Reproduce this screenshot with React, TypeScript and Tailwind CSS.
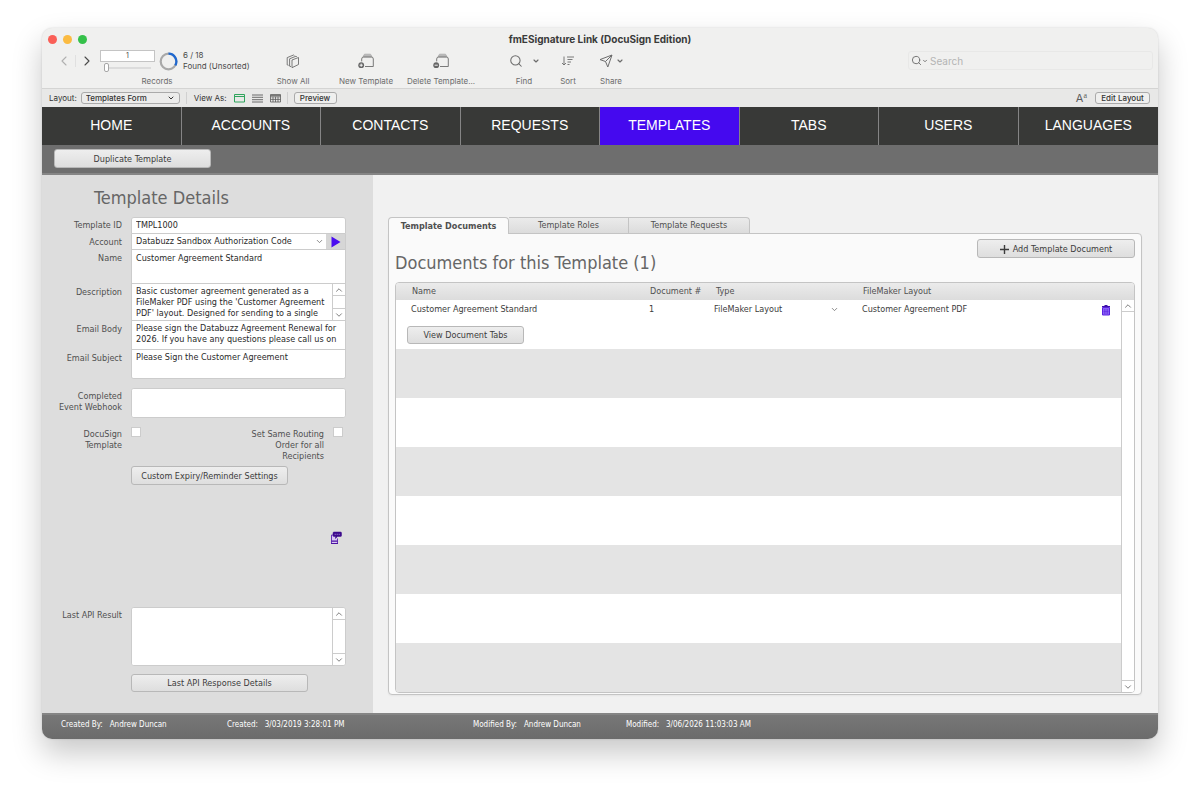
import React from 'react';
import { ChevronDown, ChevronLeft, ChevronRight, ChevronUp, Search } from 'lucide-react';

const navItems = ['HOME', 'ACCOUNTS', 'CONTACTS', 'REQUESTS', 'TEMPLATES', 'TABS', 'USERS', 'LANGUAGES'];

const buttonClass =
  'flex items-center justify-center rounded-[3px] border border-[#b8b8b8] bg-linear-to-b from-[#eeeeee] to-[#dedede] pt-px text-[#3c3c3c]';

const fieldClass = 'block w-full resize-none overflow-hidden bg-white px-1 text-[#2a2a2a] outline-none';

interface ToolItemProps {
  label: string;
  className: string;
  children: React.ReactNode;
}

const ToolItem: React.FC<ToolItemProps> = ({ label, className, children }) => (
  <button type="button" className={`flex shrink-0 flex-col items-center text-[#6c6c6c] ${className}`}>
    <span className="flex h-6 items-center">{children}</span>
    <span className="mt-[2px] h-3 text-[8px] leading-3 whitespace-nowrap">{label}</span>
  </button>
);

const ScrollBar: React.FC = () => (
  <div className="flex h-full w-[13px] shrink-0 flex-col justify-between border-l border-[#cccccc] bg-white text-[#666666]">
    <button type="button" aria-label="Scroll up" className="flex h-3 items-center justify-center border-b border-[#cccccc]">
      <ChevronUp className="h-[10px] w-[10px]" />
    </button>
    <button type="button" aria-label="Scroll down" className="flex h-3 items-center justify-center border-t border-[#cccccc]">
      <ChevronDown className="h-[10px] w-[10px]" />
    </button>
  </div>
);

interface FieldRowProps {
  id: string;
  label: React.ReactNode;
  className: string;
  boxClass?: string;
  children: React.ReactNode;
}

const FieldRow: React.FC<FieldRowProps> = ({ id, label, className, boxClass = '', children }) => (
  <div className={`flex gap-[9px] ${className}`}>
    <label htmlFor={id} className="w-20 shrink-0 pt-[3px] text-right text-[#505050]">
      {label}
    </label>
    <div className={`flex min-w-0 flex-1 overflow-hidden border border-[#cccccc] bg-white ${boxClass}`}>{children}</div>
  </div>
);

const StackIcon: React.FC = () => (
  <svg width="14" height="15" viewBox="0 0 14 15" fill="none" stroke="currentColor" strokeWidth="0.9" strokeLinejoin="round">
    <path d="M6 6 12.500 3.500V10.500L6 13.700Z" />
    <path d="M5 12.600 3.600 12.200V4.800L10 2.200 10.800 2.700" />
    <path d="M2.600 11.300 1.200 10.900V3.600L7.600 1 8.400 1.500" />
  </svg>
);

const TemplateIcon: React.FC<{ minus?: boolean }> = ({ minus }) => (
  <svg width="17" height="16" viewBox="0 0 17 16" fill="none" stroke="currentColor" strokeWidth="0.9">
    <path d="M5 3.800 6.500 1.200h6L14 3.800Z" fill="#b8b8b8" stroke="#b0b0b0" />
    <path d="M3.700 8.400V6a2 2 0 0 1 2-2h7.600a2 2 0 0 1 2 2v7.500H7" />
    <circle cx="3.200" cy="12.200" r="2.900" fill="#666666" stroke="none" />
    <path d={minus ? 'M1.600 12.200h3.200' : 'M1.600 12.200h3.200M3.200 10.600v3.200'} stroke="#ffffff" />
  </svg>
);

const TitleBar: React.FC = () => (
  <div className="grid grid-cols-3 items-center px-[6px] pt-[5px]">
    <div className="flex gap-[6px]">
      <button type="button" aria-label="Close" className="h-[9px] w-[9px] rounded-full bg-[#fa5f57]" />
      <button type="button" aria-label="Minimize" className="h-[9px] w-[9px] rounded-full bg-[#fbbb42]" />
      <button type="button" aria-label="Zoom" className="h-[9px] w-[9px] rounded-full bg-[#35c14a]" />
    </div>
    <h1 className="text-center text-[10px] leading-3 font-bold whitespace-nowrap text-[#3a3a3a]">
      fmESignature Link (DocuSign Edition)
    </h1>
  </div>
);

const Toolbar: React.FC = () => (
  <div className="flex pt-1 pb-px">
    <div className="ml-[14px] w-[202px] shrink-0 text-[#4a4a4a]">
      <div className="flex h-6 items-center">
        <button type="button" aria-label="Previous record" className="text-[#b0b0b0]">
          <ChevronLeft className="h-4 w-4" strokeWidth={1.6} />
        </button>
        <span className="mx-[3px] h-3 w-px bg-[#e0e0e0]" />
        <button type="button" aria-label="Next record" className="text-[#4a4a4a]">
          <ChevronRight className="h-4 w-4" strokeWidth={1.6} />
        </button>
        <div className="ml-[5px] w-[55px]">
          <input
            aria-label="Record number"
            defaultValue="1"
            className="block h-3 w-full border border-[#c4c4c4] bg-white text-center text-[7px] leading-3 outline-none"
          />
          <div className="mt-px flex h-[9px] items-center px-1">
            <span className="h-[9px] w-[5px] rounded-[2px] border border-[#a6a6a6] bg-white" />
            <span className="h-[2px] flex-1 bg-[#dcdcdc]" />
          </div>
        </div>
        <svg className="ml-1" width="19" height="19" viewBox="0 0 19 19" fill="none" strokeWidth="2.2">
          <circle cx="9.500" cy="9.500" r="7.800" stroke="#a9a9a9" />
          <path d="M9.500 1.700A7.800 7.800 0 0 1 16.300 13.400" stroke="#1f68d0" />
        </svg>
        <div className="ml-[5px] text-[8px] leading-[11px] whitespace-nowrap">
          <div>6 / 18</div>
          <div>Found (Unsorted)</div>
        </div>
      </div>
      <div className="mt-[2px] h-3 text-center text-[8px] leading-3 text-[#6c6c6c]">Records</div>
    </div>
    <ToolItem label="Show All" className="w-[70px]">
      <StackIcon />
    </ToolItem>
    <ToolItem label="New Template" className="w-[76px]">
      <TemplateIcon />
    </ToolItem>
    <ToolItem label="Delete Template..." className="w-[74px]">
      <TemplateIcon minus />
    </ToolItem>
    <ToolItem label="Find" className="ml-[30px] w-8">
      <span className="flex items-center gap-[9px]">
        <Search className="h-[14px] w-[14px]" strokeWidth={1.8} />
        <ChevronDown className="h-2 w-2" strokeWidth={3.5} />
      </span>
    </ToolItem>
    <ToolItem label="Sort" className="w-14">
      <svg width="14" height="12" viewBox="0 0 14 12" fill="none" stroke="currentColor" strokeWidth="0.9">
        <path d="M3 1.500v8.500M1 8l2 2 2-2M6 2h7M6.500 4.500h5M6.500 7h3.500M6.500 9.500h2" />
      </svg>
    </ToolItem>
    <ToolItem label="Share" className="w-[30px]">
      <span className="flex items-center gap-[3px]">
        <svg width="14" height="14" viewBox="0 0 14 14" fill="none" stroke="currentColor" strokeWidth="1" strokeLinejoin="round">
          <path d="M13 1 8.800 13 6.500 7.500 1 5.600ZM13 1 6.500 7.500" />
        </svg>
        <ChevronDown className="h-2 w-2" strokeWidth={3.5} />
      </span>
    </ToolItem>
    <label className="mt-[2px] mr-[5px] ml-auto flex h-[19px] w-[245px] items-center rounded-[3px] border border-[#e8e8e7] px-[2px] text-[#6c6c6c]">
      <Search className="h-[11px] w-[11px] shrink-0" strokeWidth={2} />
      <ChevronDown className="h-[6px] w-[6px] shrink-0" strokeWidth={3.5} />
      <input
        aria-label="Search"
        placeholder="Search"
        className="w-full bg-transparent pl-[2px] text-[10px] leading-3 outline-none placeholder:text-[#b4b4b4]"
      />
    </label>
  </div>
);

const LayoutBar: React.FC = () => (
  <div className="flex h-[19px] items-center border-t border-[#d4d4d3] bg-[#e8e8e7] pr-2 pl-[7px] text-[8px] text-[#333333]">
    <label htmlFor="layout">Layout:</label>
    <span className="ml-1 flex h-3 w-[99px] items-center rounded-[3px] border border-[#aaaaaa] bg-[#ececeb] pr-1 font-medium">
      <select id="layout" className="w-full appearance-none pl-1 leading-3 outline-none">
        <option>Templates Form</option>
      </select>
      <ChevronDown className="h-2 w-2 shrink-0" strokeWidth={3} />
    </span>
    <span className="ml-[6px] h-3 w-px bg-[#d0d0d0]" />
    <span className="ml-[7px]">View As:</span>
    <button type="button" aria-label="Form view" className="ml-[7px] text-[#2fa45c]">
      <svg width="11" height="9" viewBox="0 0 11 9" fill="none" stroke="currentColor">
        <path d="M.5 .5h10v7.500H.5ZM.5 2.500h10" />
      </svg>
    </button>
    <button type="button" aria-label="List view" className="ml-[7px] text-[#5c5c5c]">
      <svg width="11" height="9" viewBox="0 0 11 9" fill="none" stroke="currentColor" strokeWidth="0.9">
        <path d="M0 1h11M0 3.300h11M0 5.700h11M0 8h11" />
      </svg>
    </button>
    <button type="button" aria-label="Table view" className="ml-[7px] text-[#5c5c5c]">
      <svg width="11" height="9" viewBox="0 0 11 9" fill="none" stroke="currentColor" strokeWidth="0.8">
        <path d="M.5 .5h10v7.500H.5ZM.5 1.500h10M.5 2.800h10M.5 5.400h10M3 2.800V8M5.500 2.800V8M8 2.800V8" />
      </svg>
    </button>
    <span className="ml-[6px] h-3 w-px bg-[#d0d0d0]" />
    <button type="button" className="ml-[6px] h-3 w-[43px] rounded-[3px] border border-[#aaaaaa] bg-[#efefee] leading-[10px] font-medium">
      Preview
    </button>
    <button type="button" aria-label="Text size" className="ml-auto flex items-start text-[11px] leading-3 text-[#5c5c5c]">
      A<span className="font-['Liberation_Serif',serif] text-[8px] leading-2">a</span>
    </button>
    <button type="button" className="ml-2 h-3 w-[55px] rounded-[3px] border border-[#aaaaaa] bg-[#efefee] leading-[10px] font-medium">
      Edit Layout
    </button>
  </div>
);

const DetailsPanel: React.FC = () => (
  <section className="flex w-[331px] shrink-0 flex-col bg-[#dddddd] pr-[27px] pb-5">
    <h2 className="mt-3 ml-[52px] text-[18px] leading-[22px] text-[#666666]">Template Details</h2>
    <form className="mt-2">
      <FieldRow id="template-id" label="Template ID" className="h-[17px]" boxClass="rounded-t-[3px]">
        <input id="template-id" defaultValue="TMPL1000" className={fieldClass} />
      </FieldRow>
      <FieldRow id="account" label="Account" className="h-4" boxClass="border-t-0">
        <select id="account" defaultValue="Databuzz Sandbox Authorization Code" className={`${fieldClass} appearance-none`}>
          <option>Databuzz Sandbox Authorization Code</option>
        </select>
        <ChevronDown className="mt-[3px] mr-[2px] h-[9px] w-[9px] shrink-0 text-[#666666]" />
        <button type="button" aria-label="Go to account" className="flex w-[19px] shrink-0 items-center justify-center bg-[#d6d6d6]">
          <svg width="10" height="12" viewBox="0 0 10 12">
            <path d="M.5 .5 9.500 6 .5 11.500Z" fill="#4a0df0" />
          </svg>
        </button>
      </FieldRow>
      <FieldRow id="name" label="Name" className="h-[34px]" boxClass="border-t-0">
        <textarea id="name" defaultValue="Customer Agreement Standard" className={`${fieldClass} pt-[3px]`} />
      </FieldRow>
      <FieldRow id="description" label="Description" className="h-[37px]" boxClass="border-t-0">
        <textarea
          id="description"
          defaultValue={"Basic customer agreement generated as a\nFileMaker PDF using the 'Customer Agreement\nPDF' layout. Designed for sending to a single"}
          className={`${fieldClass} pt-[2px] whitespace-pre`}
        />
        <ScrollBar />
      </FieldRow>
      <FieldRow id="email-body" label="Email Body" className="h-[29px]" boxClass="border-t-0">
        <textarea
          id="email-body"
          defaultValue={'Please sign the Databuzz Agreement Renewal for\n2026. If you have any questions please call us on'}
          className={`${fieldClass} pt-[2px] whitespace-pre`}
        />
      </FieldRow>
      <FieldRow id="email-subject" label="Email Subject" className="h-[29px]" boxClass="rounded-b-[3px] border-t-0">
        <textarea id="email-subject" defaultValue="Please Sign the Customer Agreement" className={`${fieldClass} pt-[2px]`} />
      </FieldRow>
      <FieldRow
        id="webhook"
        label={
          <>
            Completed
            <br />
            Event Webhook
          </>
        }
        className="mt-[9px] h-[30px]"
        boxClass="rounded-[3px]"
      >
        <textarea id="webhook" className={fieldClass} />
      </FieldRow>
      <div className="mt-[9px] flex items-start">
        <label htmlFor="docusign-template" className="w-20 pt-[2px] text-right text-[#505050]">
          DocuSign
          <br />
          Template
        </label>
        <input id="docusign-template" type="checkbox" className="ml-[9px] h-[10px] w-[10px] appearance-none border border-[#cccccc] bg-white" />
        <label htmlFor="same-routing" className="ml-auto pt-[2px] text-right text-[#505050]">
          Set Same Routing
          <br />
          Order for all
          <br />
          Recipients
        </label>
        <input id="same-routing" type="checkbox" className="mr-[3px] ml-[9px] h-[10px] w-[10px] appearance-none border border-[#cccccc] bg-white" />
      </div>
      <button type="button" className={`${buttonClass} mt-1 ml-[89px] h-[19px] w-[157px]`}>
        Custom Expiry/Reminder Settings
      </button>
      <div className="mt-[46px] flex justify-end pr-1">
        <button type="button" aria-label="Send message">
          <svg width="12" height="14" viewBox="0 0 12 14">
            <path d="M4 4H1.500v8.500h6V7.500" fill="#dac8f3" stroke="#6a35bd" strokeWidth="1" />
            <path d="M1.500 10.200h6M1 12.500h7" stroke="#4b12a2" strokeWidth="1.200" />
            <path d="M4 1h6.500a1 1 0 0 1 1 1v2.500a1 1 0 0 1-1 1H7.500L5.500 7.500V5.500H4a1 1 0 0 1-1-1V2a1 1 0 0 1 1-1Z" fill="#3d0a8c" stroke="#3d0a8c" strokeWidth="0.500" />
            <path d="M4.700 3.300h1M6.700 3.300h1M8.700 3.300h1" stroke="#b99ae8" strokeWidth="0.900" />
          </svg>
        </button>
      </div>
      <FieldRow id="api-result" label="Last API Result" className="mt-[62px] h-[59px]" boxClass="rounded-[3px]">
        <textarea id="api-result" className={fieldClass} />
        <ScrollBar />
      </FieldRow>
      <button type="button" className={`${buttonClass} mt-2 ml-[89px] h-[18px] w-[177px]`}>
        Last API Response Details
      </button>
    </form>
  </section>
);

const DocumentsTable: React.FC = () => (
  <div className="overflow-hidden rounded-[4px] border border-[#c4c4c4]">
    <table className="w-full table-fixed border-separate border-spacing-0 text-left text-[#3c3c3c]">
      <thead>
        <tr className="h-[17px] bg-linear-to-b from-[#ebebeb] to-[#dcdcdc] text-[#505050]">
          <th className="w-[250px] pl-4 font-normal">Name</th>
          <th className="w-[66px] pl-1 font-normal whitespace-nowrap">Document #</th>
          <th className="w-[147px] pl-1 font-normal">Type</th>
          <th className="pl-1 font-normal">FileMaker Layout</th>
          <th className="w-5" aria-label="Delete" />
          <th className="w-[13px]" aria-label="Scroll" />
        </tr>
      </thead>
      <tbody>
        <tr className="h-[49px] bg-white align-top">
          <td className="pt-1 pl-[15px]">
            Customer Agreement Standard
            <button type="button" className={`${buttonClass} mt-[11px] -ml-1 h-[18px] w-[117px]`}>
              View Document Tabs
            </button>
          </td>
          <td className="pt-1 pl-[3px]">1</td>
          <td className="pt-[3px] pl-[2px]">
            <span className="flex items-center pr-5">
              <select aria-label="Type" className="h-3 w-full appearance-none outline-none">
                <option>FileMaker Layout</option>
              </select>
              <ChevronDown className="h-[9px] w-[9px] shrink-0 text-[#666666]" />
            </span>
          </td>
          <td className="pt-1 pl-[3px]">Customer Agreement PDF</td>
          <td className="pt-[5px]">
            <button type="button" aria-label="Delete document" className="block">
              <svg width="10" height="11" viewBox="0 0 10 11">
                <path d="M1.500 2.500h7v7.500h-7Z" fill="#8a63f5" stroke="#5a22e0" />
                <path d="M1 1.500h8M3.500 .7h3" stroke="#3d10a8" strokeWidth="1.200" />
                <path d="M3.500 4v5M5 4v5M6.500 4v5M2.500 6.500h5" stroke="#5a22e0" strokeWidth="0.500" />
              </svg>
            </button>
          </td>
          <td rowSpan={8} className="h-px p-0">
            <ScrollBar />
          </td>
        </tr>
        {[1, 2, 3, 4, 5, 6, 7].map((row) => (
          <tr key={row} className="h-[49px] odd:bg-white even:bg-[#e4e4e4]">
            <td colSpan={5} />
          </tr>
        ))}
      </tbody>
    </table>
  </div>
);

const DocumentsPanel: React.FC = () => (
  <section className="min-w-0 flex-1 bg-[#f1f1f1] pt-[42px] pr-4 pb-[18px] pl-[15px]">
    <div role="tablist" className="flex h-4 text-[#505050]">
      <button type="button" role="tab" aria-selected="true" className="relative -mb-px h-[17px] w-[121px] rounded-t-[4px] border border-b-0 border-[#c4c4c4] bg-[#fafafa] font-bold">
        Template Documents
      </button>
      <button type="button" role="tab" aria-selected="false" className="w-[120px] border-t border-r border-[#c4c4c4] bg-linear-to-b from-[#ebebeb] to-[#dcdcdc]">
        Template Roles
      </button>
      <button type="button" role="tab" aria-selected="false" className="w-[121px] rounded-tr-[4px] border-t border-r border-[#c4c4c4] bg-linear-to-b from-[#ebebeb] to-[#dcdcdc]">
        Template Requests
      </button>
    </div>
    <div className="rounded-[4px] rounded-tl-none border border-[#c4c4c4] bg-[#fafafa] px-[6px] pt-[5px] pb-px shadow-xs">
      <div className="flex h-[43px] items-start justify-between">
        <h2 className="mt-[13px] text-[18px] leading-[22px] text-[#666666]">Documents for this Template (1)</h2>
        <button type="button" className={`${buttonClass} h-[19px] w-[158px] gap-1`}>
          <svg width="9" height="9" viewBox="0 0 9 9" stroke="currentColor" strokeWidth="1.400">
            <path d="M4.500 0v9M0 4.500h9" />
          </svg>
          Add Template Document
        </button>
      </div>
      <DocumentsTable />
    </div>
  </section>
);

const Footer: React.FC = () => (
  <footer className="flex h-[26px] border-t-2 border-[#858585] bg-linear-to-b from-[#777777] to-[#6b6b6b] pt-1 pl-[19px] text-[8px] leading-3 whitespace-nowrap text-white">
    <div className="w-[166px]">Created By:&nbsp;&nbsp; Andrew Duncan</div>
    <div className="w-[246px]">Created:&nbsp;&nbsp; 3/03/2019 3:28:01 PM</div>
    <div className="w-[153px]">Modified By:&nbsp;&nbsp; Andrew Duncan</div>
    <div>Modified:&nbsp;&nbsp; 3/06/2026 11:03:03 AM</div>
  </footer>
);

const App: React.FC = () => {
  return (
    <div className="min-h-screen bg-white px-[42px] pt-7 pb-[55px]">
      <div className="overflow-hidden rounded-[10px] bg-[#f0f0ef] font-['DejaVu_Sans_Condensed','DejaVu_Sans',sans-serif] text-[9px] leading-[11px] shadow-[0_14px_30px_rgba(0,0,0,0.22),0_0_2px_rgba(0,0,0,0.15)]">
        <header className="font-[Inter,sans-serif]">
          <TitleBar />
          <Toolbar />
          <LayoutBar />
        </header>
        <nav className="grid grid-cols-8 bg-[#383937] font-['Liberation_Sans',sans-serif] text-[14px] text-white">
          {navItems.map((item) => (
            <a
              key={item}
              href="#"
              className={`flex h-[38px] items-center justify-center border-r border-[#858585] pb-[2px] last:border-r-0 ${item === 'TEMPLATES' ? 'bg-[#4509ef]' : ''}`}
            >
              {item}
            </a>
          ))}
        </nav>
        <div className="flex h-[30px] items-start border-b-2 border-[#858585] bg-[#6e6e6e] pt-1 pl-3">
          <button type="button" className={`${buttonClass} h-[19px] w-[157px]`}>
            Duplicate Template
          </button>
        </div>
        <main className="flex">
          <DetailsPanel />
          <DocumentsPanel />
        </main>
        <Footer />
      </div>
    </div>
  );
};

export default App;
